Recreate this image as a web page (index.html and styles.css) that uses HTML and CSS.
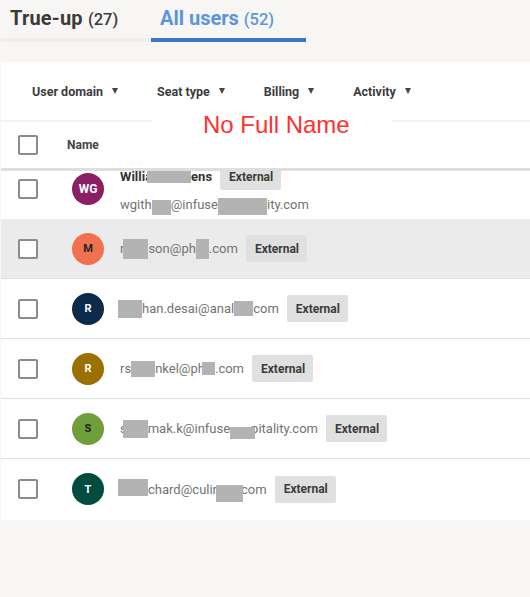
FILE: index.html
```html
<!DOCTYPE html>
<html>
<head>
<meta charset="utf-8">
<link rel="stylesheet" href="styles.css">
</head>
<body>
<div class="page">
  <div class="tabs">
    <div class="tab">True-up <span class="count">(27)</span></div>
    <div class="tab active">All users <span class="count">(52)</span></div>
  </div>
  <div class="card">
    <div class="filters">
      <div class="filter">User domain <span class="caret"></span></div>
      <div class="filter">Seat type <span class="caret"></span></div>
      <div class="filter">Billing <span class="caret"></span></div>
      <div class="filter">Activity <span class="caret"></span></div>
    </div>
    <div class="thead">
      <span class="cb"></span>
      <span class="th">Name</span>
    </div>
    <div class="tbody">
      <div class="row first">
        <span class="cb"></span>
        <span class="av av-wg">WG</span>
        <div class="cell two">
          <div class="nameline"><span>Willia</span><span class="rd rd-name"></span><span>ens</span><span class="chip">External</span></div>
          <div class="mail"><span>wgith</span><span class="rd rd-w19 rd-h15 rd-d7"></span><span>@infuse</span><span class="rd rd-w49 rd-h17 rd-d5"></span><span>ity.com</span></div>
        </div>
      </div>
      <div class="row hover">
        <span class="cb"></span>
        <span class="av av-m">M</span>
        <div class="cell">
          <div class="mail"><span>r</span><span class="rd rd-w25 rd-h20 rd-l1"></span><span>son@ph</span><span class="rd rd-w13 rd-h20"></span><span>.com</span></div>
          <span class="chip">External</span>
        </div>
      </div>
      <div class="row">
        <span class="cb"></span>
        <span class="av av-r1">R</span>
        <div class="cell">
          <div class="mail"><span class="rd rd-w24 rd-h18 rd-l2"></span><span>han.desai@anal</span><span class="rd rd-w19 rd-h15"></span><span>com</span></div>
          <span class="chip">External</span>
        </div>
      </div>
      <div class="row">
        <span class="cb"></span>
        <span class="av av-r2">R</span>
        <div class="cell">
          <div class="mail"><span>rs</span><span class="rd rd-w24 rd-h16"></span><span>nkel@ph</span><span class="rd rd-w13 rd-h13 rd-l3"></span><span>.com</span></div>
          <span class="chip">External</span>
        </div>
      </div>
      <div class="row">
        <span class="cb"></span>
        <span class="av av-s">S</span>
        <div class="cell">
          <div class="mail"><span>s</span><span class="rd rd-w25 rd-h18 rd-l4"></span><span>mak.k@infuse</span><span class="rd rd-w25 rd-h12 rd-d8 rd-r4"></span><span>pitality.com</span></div>
          <span class="chip">External</span>
        </div>
      </div>
      <div class="row last">
        <span class="cb"></span>
        <span class="av av-t">T</span>
        <div class="cell">
          <div class="mail"><span class="rd rd-w30 rd-h17 rd-u3 rd-l2"></span><span>chard@culir</span><span class="rd rd-w27 rd-h17 rd-d9 rd-l1 rd-r2"></span><span>com</span></div>
          <span class="chip">External</span>
        </div>
      </div>
    </div>
    <div class="annot">No Full Name</div>
  </div>
</div>
</body>
</html>
```

FILE: styles.css
```css
* { box-sizing: border-box; }
html, body { margin: 0; padding: 0; }
body {
  background: #f7f6f4;
  font-family: Roboto, "Liberation Sans", Arial, sans-serif;
  width: 530px;
  height: 597px;
  overflow: hidden;
}
.page { padding-left: 1px; }

.tabs { display: flex; height: 42px; }
.tab {
  height: 42px;
  padding: 7px 0 0 9px;
  font-size: 20px;
  line-height: 23px;
  font-weight: 700;
  color: #3a3a3a;
  border-bottom: 4px solid #efeeec;
  width: 150px;
  letter-spacing: 0.2px;
}
.tab.active {
  width: 155px;
  color: #5b95da;
  border-bottom-color: #3a77c0;
  letter-spacing: 0;
}
.tab .count { font-size: 16.5px; font-weight: 500; letter-spacing: 0; }

.card {
  position: relative;
  margin-top: 20px;
  background: #fff;
  height: 458px;
}

.filters {
  display: flex;
  align-items: center;
  gap: 39px;
  height: 60px;
  padding: 0 0 0 31px;
  border-bottom: 2px solid #f3f3f3;
}
.filter {
  display: flex;
  align-items: center;
  gap: 9px;
  font-size: 12.5px;
  font-weight: 700;
  color: #3c3c3c;
}
.caret {
  width: 0;
  height: 0;
  border-left: 3.5px solid transparent;
  border-right: 3.5px solid transparent;
  border-top: 6px solid #444;
}

.cb {
  width: 20px;
  height: 20px;
  border: 2px solid #8c8c8c;
  border-radius: 2px;
  background: #fff;
  flex: none;
}

.thead {
  display: flex;
  align-items: center;
  height: 49px;
  padding: 0 0 0 17px;
  border-bottom: 3px solid #dedede;
}
.th {
  margin-left: 29px;
  font-size: 12px;
  font-weight: 700;
  color: #444;
}

.tbody { height: 349px; overflow: hidden; }
.row {
  display: flex;
  align-items: center;
  height: 60px;
  padding-left: 17px;
  border-bottom: 1px solid #e0e0e0;
}
.row.first { margin-top: -12px; border-bottom-color: transparent; }
.row.hover { background: #ebebeb; }
.row.last { border-bottom: none; }

.av {
  width: 32px;
  height: 32px;
  border-radius: 50%;
  margin-left: 34px;
  display: flex;
  align-items: center;
  justify-content: center;
  font-size: 11px;
  font-weight: 700;
  color: #fff;
  flex: none;
}
.av-wg { background: #8b1f66; font-size: 12px; }
.av-m { background: #f07150; color: #222; }
.av-r1 { background: #0c2b4c; }
.av-r2 { background: #9a7000; }
.av-s { background: #6f9e3b; color: #1f1f1f; }
.av-t { background: #004c3f; }

.cell {
  display: flex;
  align-items: center;
  margin-left: 16px;
  gap: 8px;
}
.cell.two {
  flex-direction: column;
  align-items: flex-start;
  gap: 4px;
}
.nameline {
  display: flex;
  align-items: center;
  height: 27px;
  font-size: 13px;
  font-weight: 700;
  color: #333;
}
.nameline .chip { margin-left: 8px; }

.mail {
  display: flex;
  align-items: center;
  height: 20px;
  font-size: 13px;
  color: #737373;
  white-space: nowrap;
}

.chip {
  display: flex;
  align-items: center;
  height: 27px;
  padding: 0 8px 0 9px;
  border-radius: 2px;
  background: #e0e0e0;
  font-size: 12px;
  font-weight: 700;
  color: #3c3c3c;
}

.rd { display: block; background: #b3b3b3; flex: none; z-index: 1; }
.rd-name { width: 44px; height: 20px; align-self: flex-start; margin-left: -5px; }
.rd-w13 { width: 13px; }
.rd-w19 { width: 19px; }
.rd-w24 { width: 24px; }
.rd-w25 { width: 25px; }
.rd-w27 { width: 27px; }
.rd-w30 { width: 30px; }
.rd-w49 { width: 49px; }
.rd-h12 { height: 12px; }
.rd-h13 { height: 13px; }
.rd-h15 { height: 15px; }
.rd-h16 { height: 16px; }
.rd-h17 { height: 17px; }
.rd-h18 { height: 18px; }
.rd-h20 { height: 20px; }
.rd-d5 { margin-top: 5px; }
.rd-d7 { margin-top: 7px; }
.rd-d8 { margin-top: 8px; }
.rd-d9 { margin-top: 9px; }
.rd-u3 { margin-bottom: 3px; }
.rd-l1 { margin-left: -1px; }
.rd-l2 { margin-left: -2px; }
.rd-l3 { margin-left: -3px; }
.rd-l4 { margin-left: -4px; }
.rd-r2 { margin-right: -2px; }
.rd-r4 { margin-right: -4px; }

.annot {
  position: absolute;
  left: 151px;
  top: 47px;
  width: 240px;
  height: 32px;
  padding: 4px 0 0 51px;
  background: #fff;
  font-family: "Liberation Sans", Arial, sans-serif;
  font-size: 24px;
  line-height: 24px;
  color: #ff3030;
}
```
